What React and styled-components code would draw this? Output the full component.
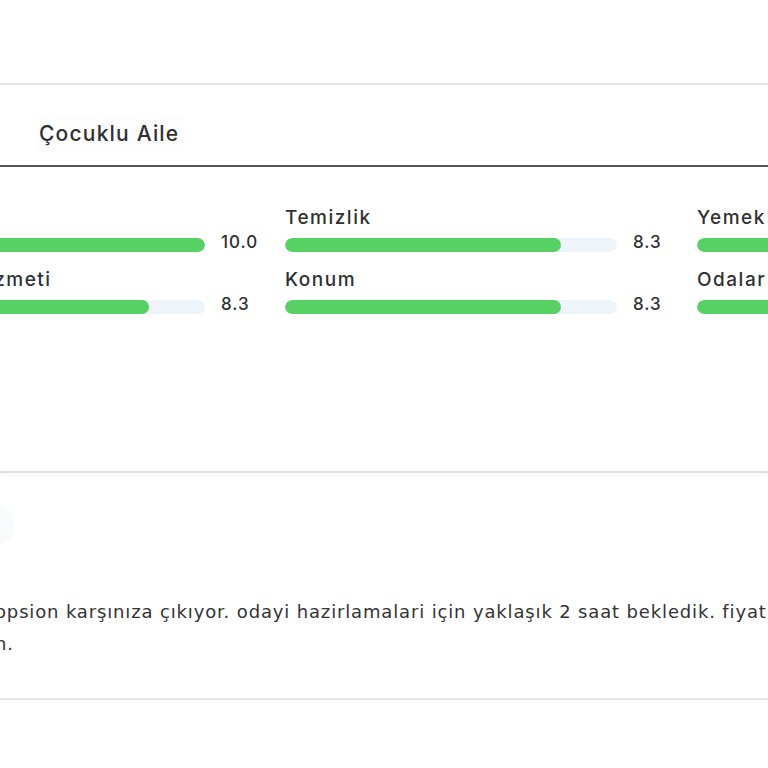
import React from "react";
import styled, { createGlobalStyle } from "styled-components";

const GlobalStyle = createGlobalStyle`
  html, body {
    margin: 0;
    padding: 0;
    background: #ffffff;
    overflow: hidden;
  }
  body {
    font-family: Inter, "Open Sans", Arial, sans-serif;
    color: #333333;
  }
`;

const Page = styled.div`
  width: 768px;
  height: 768px;
  overflow: hidden;
  padding-top: 83px;
  box-sizing: border-box;
`;

const TabBar = styled.div`
  display: flex;
  align-items: flex-end;
  height: 84px;
  border-top: 2px solid #e6e6e6;
  border-bottom: 2px solid #50555c;
  box-sizing: border-box;
  padding: 0 0 13px 35px;
`;

const Tab = styled.button`
  border: none;
  background: #fdfdfd;
  padding: 4px 4px;
  font-family: inherit;
  font-size: 21px;
  line-height: 28px;
  font-weight: 500;
  color: #2f3033;
  letter-spacing: 1.2px;
`;

const RatingsGrid = styled.div`
  display: grid;
  grid-template-columns: repeat(3, 396px);
  align-content: start;
  column-gap: 16px;
  row-gap: 17px;
  margin-left: -127px;
  padding: 40px 0 0;
  height: 304px;
  box-sizing: border-box;
`;

const RatingItem = styled.div`
  display: flex;
  flex-direction: column;
  gap: 9px;
`;

const RatingLabel = styled.div`
  font-size: 19px;
  font-weight: 500;
  line-height: 22px;
  color: #2f3033;
  letter-spacing: 1.5px;
  white-space: nowrap;
`;

const BarRow = styled.div`
  display: flex;
  align-items: center;
  gap: 16px;
  height: 14px;
`;

const Track = styled.div`
  width: 332px;
  height: 14px;
  border-radius: 7px;
  background: #edf5fb;
  overflow: hidden;
`;

const Fill = styled.div`
  height: 100%;
  border-radius: 7px;
  background: #57d163;
`;

const Value = styled.span`
  width: 48px;
  padding-bottom: 6px;
  font-size: 17px;
  line-height: 20px;
  font-weight: 500;
  color: #2f3033;
  letter-spacing: 1px;
`;

const ReviewSection = styled.div`
  border-top: 2px solid #e2e2e2;
  border-bottom: 2px solid #e4e4e4;
  box-shadow: inset 0 6px 6px -6px rgba(0, 0, 0, 0.06);
  height: 229px;
  box-sizing: border-box;
  padding-top: 32px;
`;

const Avatar = styled.div`
  width: 40px;
  height: 40px;
  margin-left: -25px;
  border-radius: 50%;
  background: #f7fbfb;
`;

const Comment = styled.p`
  margin: 51px 0 0 -5px;
  font-family: "DejaVu Sans", Inter, sans-serif;
  font-size: 18px;
  line-height: 32px;
  color: #333333;
  letter-spacing: 0.85px;
  white-space: nowrap;
`;

const ratings = [
  { label: "Personel", value: 10 },
  { label: "Temizlik", value: 8.3 },
  { label: "Yemek", value: 8.3 },
  { label: "Restoran Hizmeti", value: 8.3 },
  { label: "Konum", value: 8.3 },
  { label: "Odalar", value: 8.3 },
];

const App = () => {
  return (
    <>
      <GlobalStyle />
      <Page>
        <TabBar>
          <Tab>Çocuklu Aile</Tab>
        </TabBar>
        <RatingsGrid>
          {ratings.map((r) => (
            <RatingItem key={r.label}>
              <RatingLabel>{r.label}</RatingLabel>
              <BarRow>
                <Track>
                  <Fill style={{ width: `${r.value * 10}%` }} />
                </Track>
                <Value>{r.value.toFixed(1)}</Value>
              </BarRow>
            </RatingItem>
          ))}
        </RatingsGrid>
        <ReviewSection>
          <Avatar />
          <Comment>
            opsion karşınıza çıkıyor. odayi hazirlamalari için yaklaşık 2 saat bekledik. fiyat performans olarak iyi değil.
            <br />
            n.
          </Comment>
        </ReviewSection>
      </Page>
    </>
  );
};

export default App;
